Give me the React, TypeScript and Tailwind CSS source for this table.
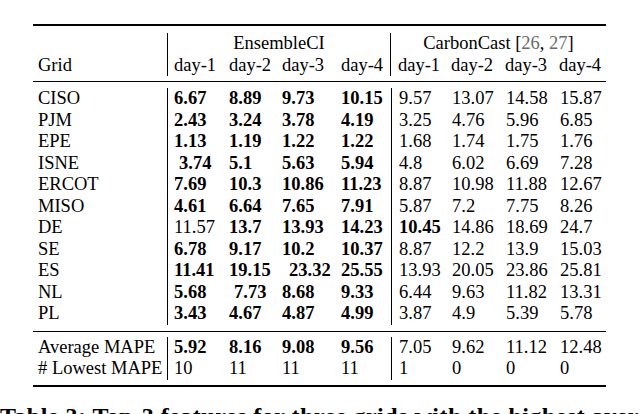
const serif = { fontFamily: '"Liberation Serif", "Times New Roman", serif' };

type Cell = { v: string; b?: boolean; pad?: string };

const ensW = ['w-[61px] pl-[6px]', 'w-[53px]', 'w-[59px]', 'w-[50px]'];
const carW = ['w-[60px] pl-[7px]', 'w-[54px]', 'w-[54px]', 'w-[48px]'];

const rows: { grid: string; e: Cell[]; c: Cell[] }[] = [
  { grid: 'CISO', e: [{ v: '6.67', b: true }, { v: '8.89', b: true }, { v: '9.73', b: true }, { v: '10.15', b: true }], c: [{ v: '9.57' }, { v: '13.07' }, { v: '14.58' }, { v: '15.87' }] },
  { grid: 'PJM', e: [{ v: '2.43', b: true }, { v: '3.24', b: true }, { v: '3.78', b: true }, { v: '4.19', b: true }], c: [{ v: '3.25' }, { v: '4.76' }, { v: '5.96' }, { v: '6.85' }] },
  { grid: 'EPE', e: [{ v: '1.13', b: true }, { v: '1.19', b: true }, { v: '1.22', b: true }, { v: '1.22', b: true }], c: [{ v: '1.68' }, { v: '1.74' }, { v: '1.75' }, { v: '1.76' }] },
  { grid: 'ISNE', e: [{ v: '3.74', b: true, pad: 'pl-[5px]' }, { v: '5.1', b: true }, { v: '5.63', b: true }, { v: '5.94', b: true }], c: [{ v: '4.8' }, { v: '6.02' }, { v: '6.69' }, { v: '7.28' }] },
  { grid: 'ERCOT', e: [{ v: '7.69', b: true }, { v: '10.3', b: true }, { v: '10.86', b: true }, { v: '11.23', b: true }], c: [{ v: '8.87' }, { v: '10.98' }, { v: '11.88' }, { v: '12.67' }] },
  { grid: 'MISO', e: [{ v: '4.61', b: true }, { v: '6.64', b: true }, { v: '7.65', b: true }, { v: '7.91', b: true }], c: [{ v: '5.87' }, { v: '7.2' }, { v: '7.75' }, { v: '8.26' }] },
  { grid: 'DE', e: [{ v: '11.57' }, { v: '13.7', b: true }, { v: '13.93', b: true }, { v: '14.23', b: true }], c: [{ v: '10.45', b: true }, { v: '14.86' }, { v: '18.69' }, { v: '24.7' }] },
  { grid: 'SE', e: [{ v: '6.78', b: true }, { v: '9.17', b: true }, { v: '10.2', b: true }, { v: '10.37', b: true }], c: [{ v: '8.87' }, { v: '12.2' }, { v: '13.9' }, { v: '15.03' }] },
  { grid: 'ES', e: [{ v: '11.41', b: true }, { v: '19.15', b: true }, { v: '23.32', b: true, pad: 'pl-[7px]' }, { v: '25.55', b: true }], c: [{ v: '13.93' }, { v: '20.05' }, { v: '23.86' }, { v: '25.81' }] },
  { grid: 'NL', e: [{ v: '5.68', b: true }, { v: '7.73', b: true, pad: 'pl-[5px]' }, { v: '8.68', b: true }, { v: '9.33', b: true }], c: [{ v: '6.44' }, { v: '9.63' }, { v: '11.82' }, { v: '13.31' }] },
  { grid: 'PL', e: [{ v: '3.43', b: true }, { v: '4.67', b: true }, { v: '4.87', b: true }, { v: '4.99', b: true }], c: [{ v: '3.87' }, { v: '4.9' }, { v: '5.39' }, { v: '5.78' }] },
];

const summary: { grid: string; e: Cell[]; c: Cell[] }[] = [
  { grid: 'Average MAPE', e: [{ v: '5.92', b: true }, { v: '8.16', b: true }, { v: '9.08', b: true }, { v: '9.56', b: true }], c: [{ v: '7.05' }, { v: '9.62' }, { v: '11.12' }, { v: '12.48' }] },
  { grid: '# Lowest MAPE', e: [{ v: '10' }, { v: '11' }, { v: '11' }, { v: '11' }], c: [{ v: '1' }, { v: '0' }, { v: '0' }, { v: '0' }] },
];

function Cells({ cells, widths }: { cells: Cell[]; widths: string[] }) {
  return (
    <>
      {cells.map((c, i) => (
        <div key={i} className={`${widths[i]} shrink-0 whitespace-nowrap ${c.b ? 'font-bold' : ''}`}>
          <span className={c.pad ?? ''}>{c.v}</span>
        </div>
      ))}
    </>
  );
}

function Section({ data }: { data: typeof rows }) {
  return (
    <div className="flex">
      <div className="w-[134px] shrink-0 pl-[5px]">
        {data.map((r) => (
          <div key={r.grid} className="h-[21.5px] leading-[21.5px] whitespace-nowrap">{r.grid}</div>
        ))}
      </div>
      <div className="border-l border-black">
        {data.map((r) => (
          <div key={r.grid} className="flex h-[21.5px] leading-[21.5px]">
            <Cells cells={r.e} widths={ensW} />
          </div>
        ))}
      </div>
      <div className="border-l border-black">
        {data.map((r) => (
          <div key={r.grid} className="flex h-[21.5px] leading-[21.5px]">
            <Cells cells={r.c} widths={carW} />
          </div>
        ))}
      </div>
    </div>
  );
}

export default function App() {
  return (
    <div className="w-[640px] h-[414px] overflow-hidden bg-white text-black text-[18.5px]" style={serif}>
      <div className="h-[24px] overflow-hidden">
        <div className="pl-[203px] mt-[-21px] leading-[18px]">(b)</div>
      </div>

      <div className="ml-[33px] w-[573px]">
        <div className="h-[2px] bg-black" />
        <div className="flex pt-[7px] pb-[5px]">
          <div className="w-[134px] shrink-0 pl-[5px] pt-[21.5px]">
            <div className="h-[21.5px] leading-[21.5px]">Grid</div>
          </div>
          <div className="border-l border-black w-[223px]">
            <div className="h-[21.5px] leading-[21.5px] text-center">EnsembleCI</div>
            <div className="flex h-[21.5px] leading-[21.5px]">
              <Cells cells={[{ v: 'day-1' }, { v: 'day-2' }, { v: 'day-3' }, { v: 'day-4' }]} widths={ensW} />
            </div>
          </div>
          <div className="border-l border-black w-[216px]">
            <div className="h-[21.5px] leading-[21.5px] text-center">
              CarbonCast <span>[</span><span className="text-[#6b6b6b]">26</span>, <span className="text-[#6b6b6b]">27</span><span>]</span>
            </div>
            <div className="flex h-[21.5px] leading-[21.5px]">
              <Cells cells={[{ v: 'day-1' }, { v: 'day-2' }, { v: 'day-3' }, { v: 'day-4' }]} widths={carW} />
            </div>
          </div>
        </div>
        <div className="h-px bg-black" />
        <div className="pt-[6px] pb-[6px]">
          <Section data={rows} />
        </div>
        <div className="h-px bg-black" />
        <div className="pt-[5px] pb-[5px]">
          <Section data={summary} />
        </div>
        <div className="h-[2px] bg-black" />
      </div>

      <div className="mt-[17px] whitespace-nowrap font-bold text-[24px] leading-[24px] tracking-[0.5px]">
        Table 3: Top-3 features for three grids with the highest average
      </div>
    </div>
  );
}
